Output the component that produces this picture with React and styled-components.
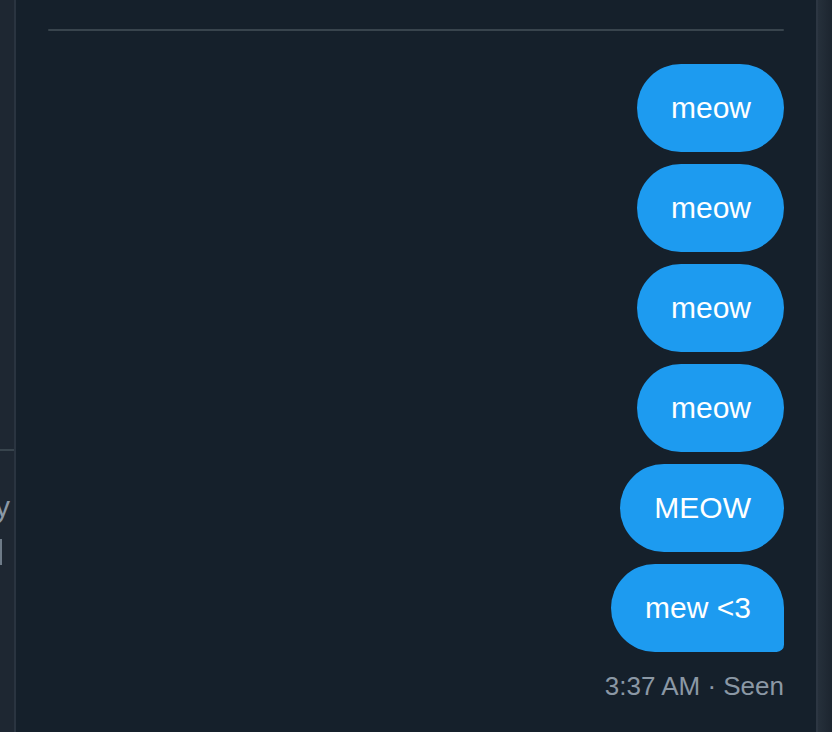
import React from "react";
import styled, { createGlobalStyle } from "styled-components";

const GlobalStyle = createGlobalStyle`
  html, body {
    margin: 0;
    padding: 0;
    background: #15202b;
  }
  body {
    font-family: "Liberation Sans", Arial, Helvetica, sans-serif;
  }
`;

const messages = [
  { id: 1, text: "meow" },
  { id: 2, text: "meow" },
  { id: 3, text: "meow" },
  { id: 4, text: "meow" },
  { id: 5, text: "MEOW" },
  { id: 6, text: "mew <3", last: true },
];

export default function App() {
  return (
    <>
      <GlobalStyle />
      <Page>
        <SideRail>
          <RailTop />
          <RailSection>
            <RailRow>
              <RailText>Settings and privacy</RailText>
            </RailRow>
            <RailRow>
              <RailButton />
            </RailRow>
          </RailSection>
        </SideRail>

        <Conversation>
          <Divider />
          <MessageList>
            {messages.map((m) => (
              <Bubble key={m.id} $last={m.last}>
                {m.text}
              </Bubble>
            ))}
            <Meta>3:37 AM · Seen</Meta>
          </MessageList>
        </Conversation>

        <EdgeRail />
      </Page>
    </>
  );
}

const Page = styled.div`
  display: flex;
  width: 832px;
  height: 732px;
  overflow: hidden;
  background: #15202b;
`;

const SideRail = styled.aside`
  width: 14px;
  flex-shrink: 0;
  display: flex;
  flex-direction: column;
  background: #1e2732;
  border-right: 2px solid #2a3440;
  overflow: hidden;
`;

const RailTop = styled.div`
  height: 449px;
  flex-shrink: 0;
  border-bottom: 2px solid #38444d;
`;

const RailSection = styled.div`
  display: flex;
  flex-direction: column;
`;

const RailRow = styled.div`
  display: flex;
  justify-content: flex-end;
  padding-right: 4px;
`;

const RailText = styled.span`
  flex-shrink: 0;
  white-space: nowrap;
  margin-top: 36px;
  font-size: 30px;
  line-height: 40px;
  color: #8b98a5;
`;

const RailButton = styled.div`
  flex-shrink: 0;
  width: 200px;
  height: 26px;
  margin-top: 12px;
  margin-right: 8px;
  border-right: 2px solid #6e7b88;
`;

const Conversation = styled.main`
  flex: 1;
  display: flex;
  flex-direction: column;
  padding: 0 32px 0 32px;
`;

const Divider = styled.div`
  height: 2px;
  margin-top: 29px;
  background: #38444d;
  border-radius: 1px;
`;

const MessageList = styled.div`
  display: flex;
  flex-direction: column;
  align-items: flex-end;
  gap: 12px;
  margin-top: 33px;
`;

const Bubble = styled.div`
  box-sizing: border-box;
  height: 88px;
  padding: 24px 33px 24px 34px;
  font-size: 30px;
  line-height: 40px;
  color: #ffffff;
  background: #1d9bf0;
  border-radius: 48px;
  border-bottom-right-radius: ${(p) => (p.$last ? "8px" : "48px")};
  white-space: nowrap;
`;

const Meta = styled.div`
  margin-top: 6px;
  font-size: 26px;
  line-height: 32px;
  color: #8b98a5;
`;

const EdgeRail = styled.div`
  width: 14px;
  flex-shrink: 0;
  background: linear-gradient(to right, #26303b, #1c252f);
  border-left: 2px solid #2c3642;
`;
